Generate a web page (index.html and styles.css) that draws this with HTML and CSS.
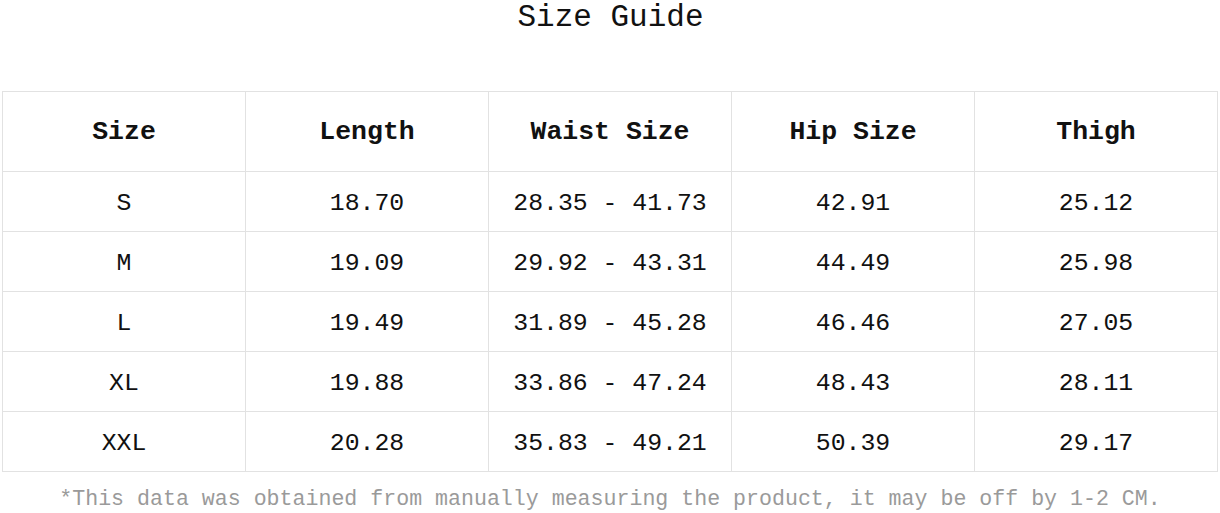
FILE: index.html
```html
<!DOCTYPE html>
<html>
<head>
<meta charset="utf-8">
<link rel="stylesheet" href="styles.css">
</head>
<body>
<div class="page">
  <h1 class="title">Size Guide</h1>
  <table class="guide">
    <thead>
      <tr><th>Size</th><th>Length</th><th>Waist Size</th><th>Hip Size</th><th>Thigh</th></tr>
    </thead>
    <tbody>
      <tr><td>S</td><td>18.70</td><td>28.35 - 41.73</td><td>42.91</td><td>25.12</td></tr>
      <tr><td>M</td><td>19.09</td><td>29.92 - 43.31</td><td>44.49</td><td>25.98</td></tr>
      <tr><td>L</td><td>19.49</td><td>31.89 - 45.28</td><td>46.46</td><td>27.05</td></tr>
      <tr><td>XL</td><td>19.88</td><td>33.86 - 47.24</td><td>48.43</td><td>28.11</td></tr>
      <tr><td>XXL</td><td>20.28</td><td>35.83 - 49.21</td><td>50.39</td><td>29.17</td></tr>
    </tbody>
  </table>
  <p class="note">*This data was obtained from manually measuring the product, it may be off by 1-2 CM.</p>
</div>
</body>
</html>
```
FILE: styles.css
```css
html, body {
  margin: 0;
  padding: 0;
  background: #fff;
}
.page {
  padding: 0 2px;
  font-family: "Liberation Mono", "DejaVu Sans Mono", monospace;
  color: #111;
}
.title {
  margin: 0;
  height: 91px;
  font-size: 31px;
  font-weight: normal;
  line-height: 36px;
  text-align: center;
  padding-left: 1px;
}
.guide {
  width: 100%;
  border-collapse: collapse;
  table-layout: fixed;
}
.guide th, .guide td {
  border: 1px solid #e2e2e2;
  text-align: center;
  padding: 0;
}
.guide th {
  height: 79px;
  font-size: 26.5px;
  font-weight: bold;
}
.guide td {
  height: 56px;
  line-height: 30px;
  font-size: 24.8px;
  padding-top: 3px;
}
.note {
  margin: 14px 0 0;
  text-align: center;
  font-size: 21.6px;
  color: #9a9a9a;
  line-height: 26px;
}
```
